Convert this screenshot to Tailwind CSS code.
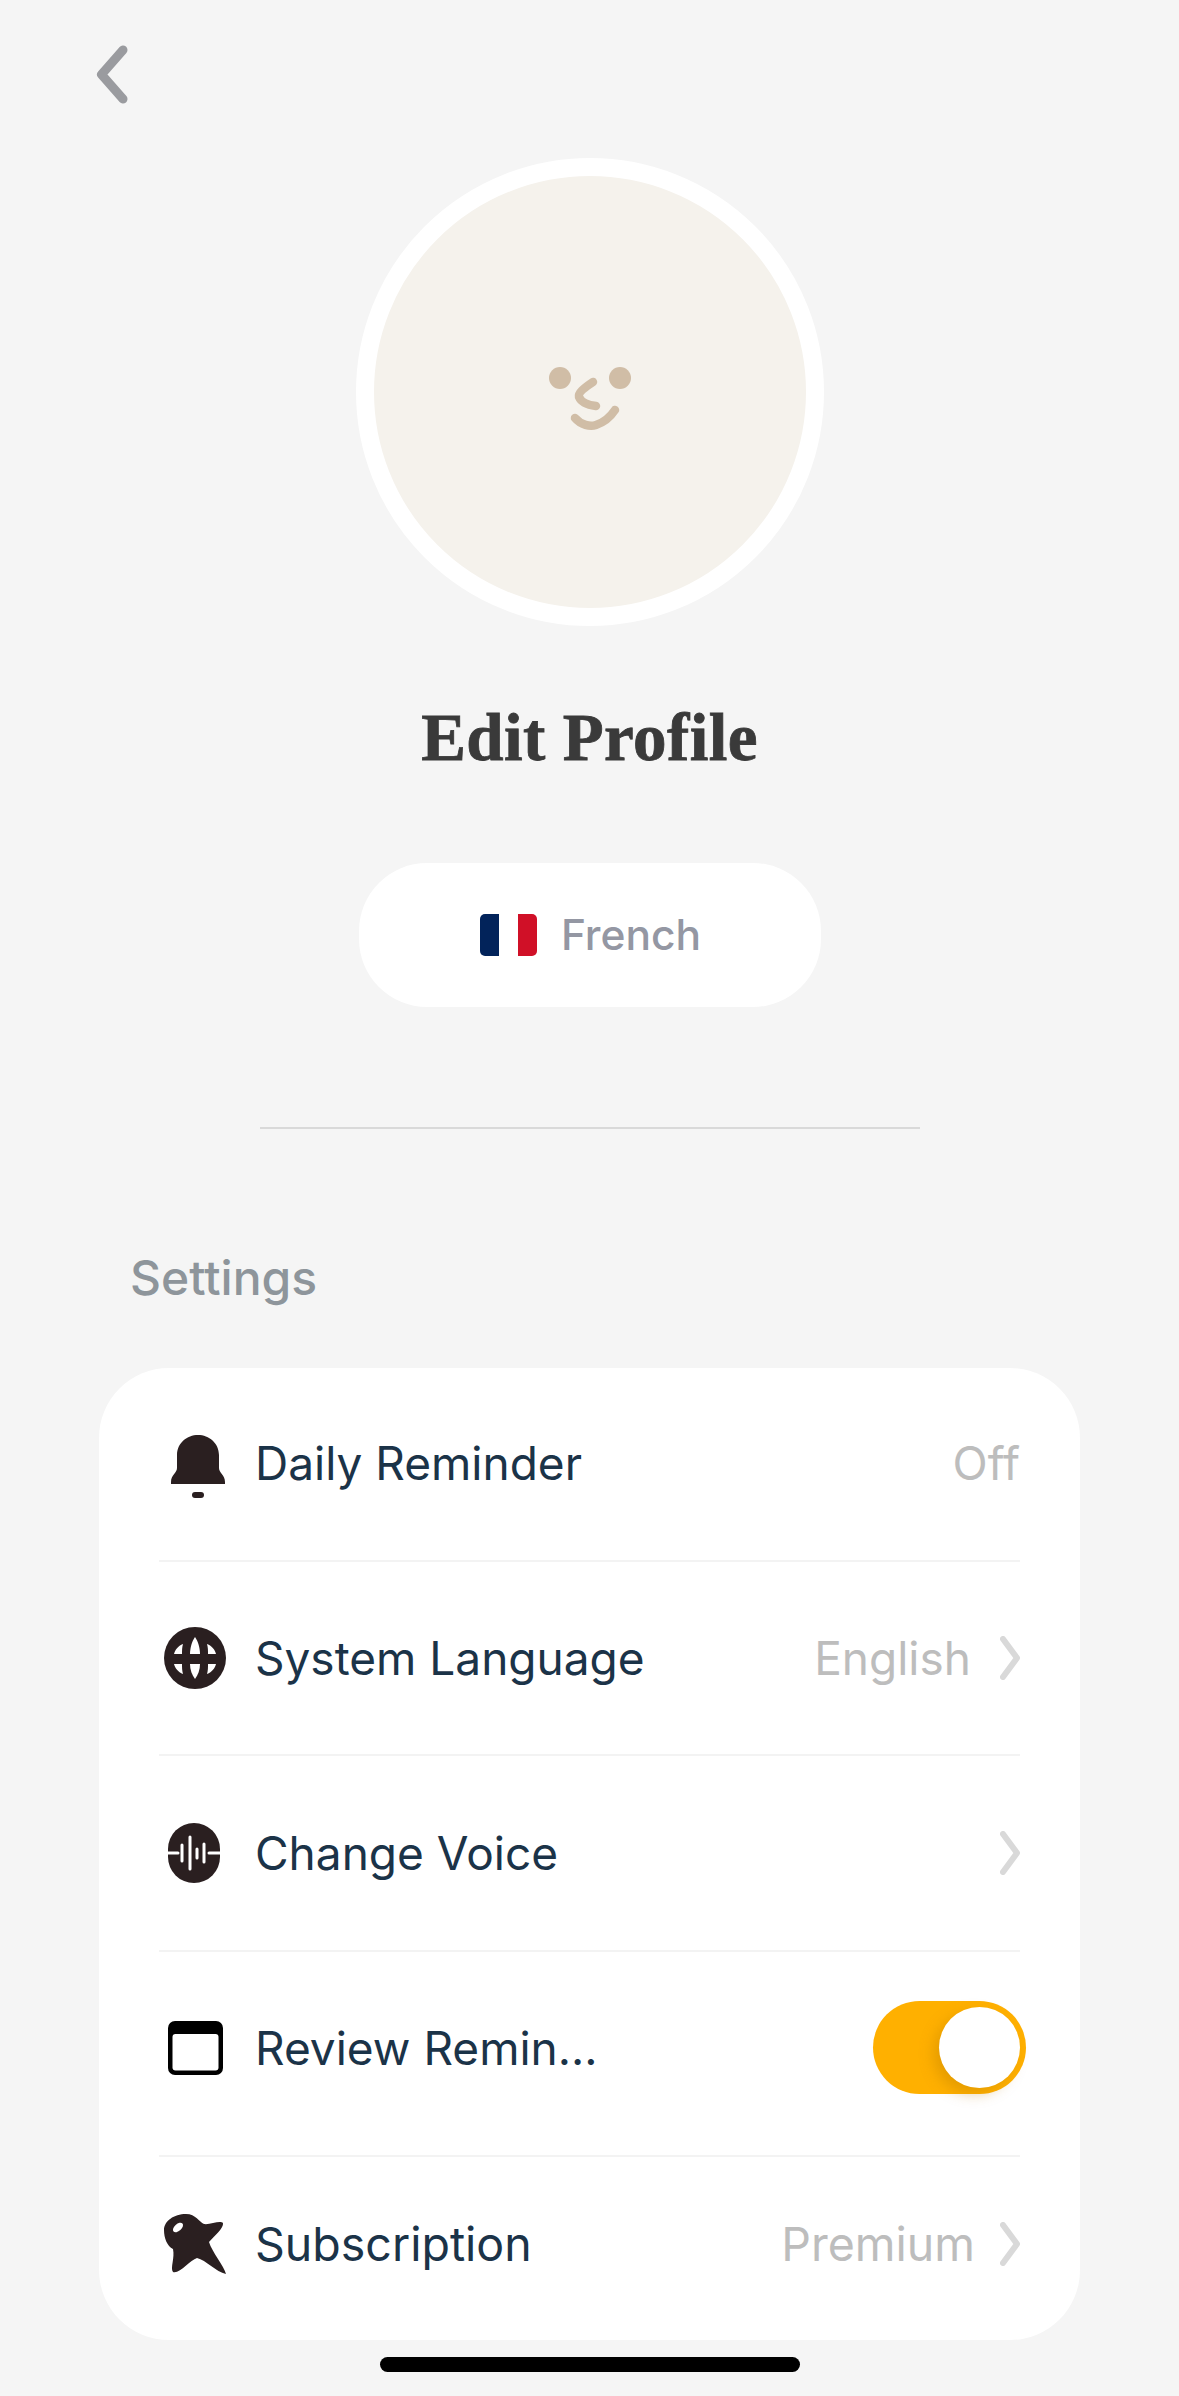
<!DOCTYPE html>
<html lang="en">
<head>
    <meta charset="UTF-8">
    <meta name="viewport" content="width=device-width,initial-scale=1.0">
    <title>Edit Profile</title>
    <script src="https://cdn.jsdelivr.net/npm/@tailwindcss/browser@4"></script>
</head>
<body class="m-0">
    <div class="flex h-[2396px] w-[1179px] flex-col overflow-hidden bg-[#f5f5f5] font-['Inter',sans-serif]">

        <!-- back -->
        <div class="h-[158px] pl-[96px] pt-[45px]">
            <svg width="32" height="59" viewBox="0 0 32 59" fill="none" stroke="#9a9b9f" stroke-width="9" stroke-linecap="round" stroke-linejoin="round">
                <path d="M27 5 L5.5 29.5 L27 54"/>
            </svg>
        </div>

        <!-- avatar -->
        <div class="flex justify-center">
            <div class="box-border flex h-[468px] w-[468px] items-center justify-center rounded-full border-[18px] border-white bg-[#f5f2ec]">
                <svg width="100" height="80" viewBox="540 351 100 80" fill="none" stroke="#d0bda6" stroke-width="8.5" stroke-linecap="round" stroke-linejoin="round">
                    <ellipse cx="560" cy="377" rx="11" ry="11" fill="#d0bda6" stroke="none"/>
                    <ellipse cx="620" cy="377" rx="11" ry="11" fill="#d0bda6" stroke="none"/>
                    <path d="M593 381 C584 387 578 392 579 396 C581 401 588 404 596 405"/>
                    <path d="M575 417 C581 424 590 426 596 424 C605 421 611 415 615 409"/>
                </svg>
            </div>
        </div>

        <h1 class="mt-[73px] text-center font-['Liberation_Serif',serif] text-[67px] leading-[76px] font-bold tracking-[0.4px] text-[#3a3a3a] [-webkit-text-stroke:0.8px_#3a3a3a]">Edit Profile</h1>

        <!-- language pill -->
        <div class="mt-[88px] flex justify-center">
            <div class="flex h-[144px] w-[462px] items-center justify-center gap-[24px] rounded-[68px] bg-white pl-[2px]">
                <svg width="57" height="42" viewBox="0 0 57 42">
                    <path d="M5 0 H19 V42 H5 A5 5 0 0 1 0 37 V5 A5 5 0 0 1 5 0 Z" fill="#02235a"/>
                    <path d="M38 0 H52 A5 5 0 0 1 57 5 V37 A5 5 0 0 1 52 42 H38 Z" fill="#d01027"/>
                </svg>
                <span class="text-[42.5px] leading-[50px] font-medium text-[#9497a3]">French</span>
            </div>
        </div>

        <div class="mx-auto mt-[120px] h-[2px] w-[660px] bg-[#d9d9d9]"></div>

        <p class="mt-[122px] pl-[130px] text-[48px] leading-[54px] font-medium text-[#8e959b]">Settings</p>

        <!-- settings card -->
        <div class="mx-[99px] mt-[63px] rounded-[70px] bg-white px-[60px]">

            <div class="flex h-[194px] items-center border-b-2 border-[#f3f3f3] pb-[2px]">
                <div class="flex w-[96px] justify-start pl-[12px] pt-[8px]">
                    <svg width="54" height="64" viewBox="0 0 54 64" fill="#2a1f20">
                        <path d="M27 0 C38 0 48 8 48 20 L48 33 C48 38 54 40 54 47 L54 49 L0 49 L0 47 C0 40 6 38 6 33 L6 20 C6 8 16 0 27 0 Z"/>
                        <rect x="21" y="57" width="12" height="6" rx="3"/>
                    </svg>
                </div>
                <span class="flex-1 text-[46px] leading-[56px] text-[#1b3348]">Daily Reminder</span>
                <span class="text-[46px] leading-[56px] text-[#bdbdbd]">Off</span>
            </div>

            <div class="flex h-[194px] items-center border-b-2 border-[#f3f3f3] pb-[1px]">
                <div class="flex w-[96px] justify-start pl-[5px]">
                    <svg width="62" height="62" viewBox="0 0 62 62">
                        <circle cx="31" cy="31" r="31" fill="#2a1f20"/>
                        <g fill="#ffffff">
                            <path d="M31 10 C34 14 36 21 36 27 L26 27 C26 21 28 14 31 10 Z"/>
                            <path d="M31 52 C34 48 36 43 36 37 L26 37 C26 43 28 48 31 52 Z"/>
                            <path d="M10 27 C11 23 14 19 19 17 C18 20 18 24 18 27 Z"/>
                            <path d="M52 27 C51 23 48 19 43 17 C44 20 44 24 44 27 Z"/>
                            <path d="M10 37 C11 41 14 45 19 47 C18 44 18 40 18 37 Z"/>
                            <path d="M52 37 C51 41 48 45 43 47 C44 44 44 40 44 37 Z"/>
                        </g>
                    </svg>
                </div>
                <span class="flex-1 text-[46px] leading-[56px] text-[#1b3348]">System Language</span>
                <span class="text-[46px] leading-[56px] text-[#bdbdbd]">English</span>
                <svg class="ml-[29px]" width="20" height="44" viewBox="0 0 20 44" fill="none" stroke="#d9d9d9" stroke-width="6" stroke-linecap="round" stroke-linejoin="round">
                    <path d="M3 3 L17 22 L3 41"/>
                </svg>
            </div>

            <div class="flex h-[196px] items-center border-b-2 border-[#f3f3f3] pb-[1px]">
                <div class="flex w-[96px] justify-start pl-[9px]">
                    <svg width="52" height="60" viewBox="0 0 52 60">
                        <rect x="0" y="0" width="52" height="60" rx="26" fill="#2a1f20"/>
                        <g stroke="#ffffff" stroke-width="3" stroke-linecap="round">
                            <path d="M-2 30 H10"/>
                            <path d="M41 30 H54"/>
                            <path d="M14 22 V38"/>
                            <path d="M22 14 V46"/>
                            <path d="M29 26 V35"/>
                            <path d="M36 21 V39"/>
                        </g>
                    </svg>
                </div>
                <span class="flex-1 text-[46px] leading-[56px] text-[#1b3348]">Change Voice</span>
                <svg width="20" height="44" viewBox="0 0 20 44" fill="none" stroke="#d9d9d9" stroke-width="6" stroke-linecap="round" stroke-linejoin="round">
                    <path d="M3 3 L17 22 L3 41"/>
                </svg>
            </div>

            <div class="flex h-[205px] items-center border-b-2 border-[#f3f3f3] pb-[12px]">
                <div class="flex w-[96px] justify-start pl-[9px]">
                    <svg width="55" height="54" viewBox="0 0 55 54">
                        <rect width="55" height="54" rx="7" fill="#000000"/>
                        <rect x="4.5" y="13" width="46" height="36.5" rx="3" fill="#ffffff"/>
                    </svg>
                </div>
                <span class="flex-1 text-[46px] leading-[56px] text-[#1b3348]">Review Remin...</span>
                <div class="-mr-[6px] flex h-[93px] w-[153px] items-center justify-end rounded-full bg-[#ffb000] pr-[6px]">
                    <div class="h-[81px] w-[81px] rounded-full bg-white shadow-[-6px_6px_14px_rgba(180,120,0,0.35)]"></div>
                </div>
            </div>

            <div class="flex h-[183px] items-center pb-[10px]">
                <div class="flex w-[96px] justify-start pl-[5px]">
                    <svg width="62" height="60" viewBox="0 0 62 60">
                        <path d="M22 0 C32 0 35 8 40 10 C46 11 56 6 59 9 C60 14 50 22 45 28 C48 38 60 52 62 60 C52 58 42 46 33 44 C26 46 16 60 9 58 C6 54 11 44 9 35 C3 32 0 24 0 16 C0 7 10 0 22 0 Z" fill="#2a1f20"/>
                        <ellipse cx="14" cy="13.5" rx="6" ry="3.5" transform="rotate(-42 14 13.5)" fill="#ffffff"/>
                    </svg>
                </div>
                <span class="flex-1 text-[46.5px] leading-[56px] text-[#1b3348]">Subscription</span>
                <span class="text-[46.5px] leading-[56px] text-[#bdbdbd]">Premium</span>
                <svg class="ml-[25px]" width="20" height="44" viewBox="0 0 20 44" fill="none" stroke="#d9d9d9" stroke-width="6" stroke-linecap="round" stroke-linejoin="round">
                    <path d="M3 3 L17 22 L3 41"/>
                </svg>
            </div>
        </div>

        <!-- home indicator -->
        <div class="mx-auto mt-[17px] h-[15px] w-[420px] rounded-full bg-black"></div>
    </div>
</body>
</html>
